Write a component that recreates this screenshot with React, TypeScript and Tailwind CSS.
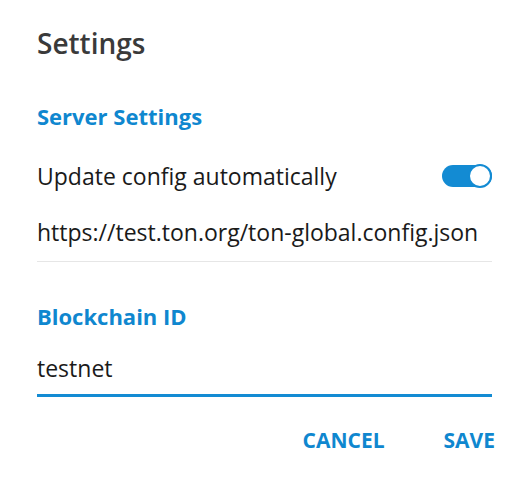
import { useState } from 'react';

const Toggle = ({ on, onChange }: { on: boolean; onChange: () => void }) => (
    <button
        type="button"
        onClick={onChange}
        className={`relative w-[50px] h-[22px] rounded-full ${on ? 'bg-[#138bd3]' : 'bg-[#c8c8c8]'}`}
    >
        <span
            className={`absolute top-[-1px] w-[24px] h-[24px] rounded-full bg-white border-[2.5px] ${
                on ? 'right-0 border-[#138bd3]' : 'left-0 border-[#c8c8c8]'
            }`}
        />
    </button>
);

export default function App() {
    const [autoUpdate, setAutoUpdate] = useState(true);
    const [chainId, setChainId] = useState('testnet');

    return (
        <div
            className="w-[520px] h-[480px] bg-white text-[23px] text-[#1a1a1a]"
            style={{ fontFamily: '"Open Sans", sans-serif' }}
        >
            <div className="flex flex-col pl-[37px] pr-[28px] pt-[25px]">
                {/* Title */}
                <h1 className="text-[28px] leading-[36px] font-semibold text-[#3a3a3a]">Settings</h1>

                {/* Server settings */}
                <h2 className="mt-[40px] text-[22px] leading-[30px] font-bold text-[#0f87cf]">
                    Server Settings
                </h2>
                <div className="mt-[29px] flex items-center justify-between h-[32px]">
                    <span className="leading-[32px]">Update config automatically</span>
                    <Toggle on={autoUpdate} onChange={() => setAutoUpdate(!autoUpdate)} />
                </div>
                <div className="mt-[24px] leading-[32px] pb-[13px] border-b border-[#e6e6e6]">
                    https://test.ton.org/ton-global.config.json
                </div>

                {/* Blockchain */}
                <h2 className="mt-[39px] text-[22px] leading-[30px] font-bold text-[#0f87cf]">
                    Blockchain ID
                </h2>
                <input
                    value={chainId}
                    onChange={(e) => setChainId(e.target.value)}
                    className="mt-[21px] h-[45px] leading-[32px] pb-[10px] outline-none border-b-[3px] border-[#138bd3] bg-transparent"
                />

                {/* Actions */}
                <div className="mt-[29px] -mr-[3px] flex justify-end gap-[59px] text-[21px] leading-[28px] font-bold text-[#0f87cf]">
                    <button type="button">CANCEL</button>
                    <button type="button">SAVE</button>
                </div>
            </div>
        </div>
    );
}
